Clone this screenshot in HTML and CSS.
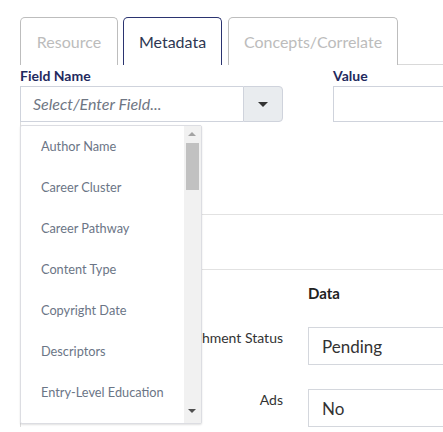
FILE: index.html
```html
<!DOCTYPE html>
<html>
<head>
<meta charset="utf-8">
<link rel="stylesheet" href="styles.css">
</head>
<body>
<div class="page">
  <div class="tabs">
    <div class="tab">Resource</div>
    <div class="tab active">Metadata</div>
    <div class="tab">Concepts/Correlate</div>
    <div class="tab-line"></div>
  </div>
  <div class="fields">
    <div class="field-col">
      <div class="label">Field Name</div>
      <div class="combo">
        <div class="combo-input">Select/Enter Field...</div>
        <div class="combo-btn"><span class="caret"></span></div>
      </div>
    </div>
    <div class="value-col">
      <div class="label">Value</div>
      <div class="value-input"></div>
    </div>
  </div>
  <div class="panel">
    <div class="band band1"></div>
    <div class="band band2"></div>
    <div class="grid">
      <div></div>
      <div class="head">Data</div>
      <div class="rlabel">Enrichment Status</div>
      <div class="box">Pending</div>
      <div class="rlabel">Ads</div>
      <div class="box">No</div>
    </div>
  </div>
  <div class="dropdown">
    <ul class="list">
      <li>Author Name</li>
      <li>Career Cluster</li>
      <li>Career Pathway</li>
      <li>Content Type</li>
      <li>Copyright Date</li>
      <li>Descriptors</li>
      <li>Entry-Level Education</li>
    </ul>
    <div class="scrollbar">
      <span class="arrow up"></span>
      <div class="thumb"></div>
      <span class="arrow down"></span>
    </div>
  </div>
</div>
</body>
</html>
```
FILE: styles.css
```css
html, body {
  margin: 0;
  padding: 0;
  background: #fff;
  overflow: hidden;
}
body {
  font-family: Lato, "Liberation Sans", sans-serif;
  width: 443px;
  height: 432px;
}
.page {
  position: relative;
  padding-left: 20px;
  padding-top: 17px;
}
.tabs {
  display: flex;
  align-items: flex-end;
  gap: 5px;
  height: 48px;
}
.tab {
  box-sizing: border-box;
  height: 48px;
  border: 1px solid #bdbdbd;
  border-bottom: none;
  border-radius: 5px 5px 0 0;
  font-size: 16px;
  line-height: 48px;
  color: #bcbcbc;
  width: 98px;
  text-align: center;
  flex-shrink: 0;
}
.tab:nth-child(2) { width: 99px; }
.tab:nth-child(3) { width: 170px; margin-left: 1px; }
.tab.active {
  border-color: #2b3470;
  color: #2e3752;
}
.tab-line {
  flex: 1;
  border-bottom: 1px solid #d9d9d9;
  margin-left: -5px;
}
.fields {
  display: flex;
  gap: 50px;
  margin-top: 3px;
}
.label {
  font-size: 14px;
  font-weight: bold;
  color: #1f2a5e;
  line-height: 16px;
  margin-bottom: 2px;
}
.field-col {
  width: 263px;
  flex-shrink: 0;
}
.combo {
  display: flex;
  height: 36px;
}
.combo-input {
  box-sizing: border-box;
  flex: 1;
  border: 1px solid #cfd3dc;
  border-right: none;
  font-size: 16px;
  font-style: italic;
  color: #6f7683;
  line-height: 34px;
  padding-left: 12px;
}
.combo-btn {
  box-sizing: border-box;
  width: 40px;
  background: #e9ecef;
  border: 1px solid #cfd3dc;
  border-radius: 0 4px 4px 0;
  display: flex;
  align-items: center;
  justify-content: center;
}
.caret {
  width: 0;
  height: 0;
  border-left: 5px solid transparent;
  border-right: 5px solid transparent;
  border-top: 5px solid #333;
}
.value-col {
  flex: 1;
  min-width: 0;
}
.value-input {
  box-sizing: border-box;
  height: 36px;
  width: 100%;
  border: 1px solid #cfd3dc;
  border-right: none;
}
.panel {
  border-left: 1px solid #dcdcdc;
}
.band1 {
  height: 92px;
  border-bottom: 1px solid #e2e2e2;
}
.band2 {
  height: 54px;
  border-bottom: 1px solid #e2e2e2;
}
.grid {
  display: grid;
  grid-template-columns: 262px 140px;
  column-gap: 25px;
  grid-template-rows: 45px 62px 50px;
}
.head {
  font-size: 15px;
  font-weight: bold;
  color: #222;
  padding-top: 14px;
}
.rlabel {
  font-size: 14px;
  color: #333;
  text-align: right;
  padding-top: 14px;
}
.box {
  box-sizing: border-box;
  height: 38px;
  margin-top: 12px;
  border: 1px solid #d4d7dd;
  border-right: none;
  font-size: 17px;
  color: #333;
  line-height: 38px;
  padding-left: 13px;
}
.dropdown {
  position: absolute;
  left: 20px;
  top: 125px;
  width: 182px;
  height: 299px;
  box-sizing: border-box;
  border: 1px solid #dcdde2;
  border-radius: 2px;
  background: #fff;
  box-shadow: 0 1px 2px rgba(0,0,0,0.12);
  display: flex;
}
.list {
  list-style: none;
  margin: 0;
  padding: 0;
  flex: 1;
  min-width: 0;
}
.list li {
  font-size: 12.75px;
  color: #6b7586;
  height: 41px;
  line-height: 41px;
  padding-left: 20px;
  white-space: nowrap;
}
.list li:first-child { margin-top: 0; }
.scrollbar {
  width: 17px;
  flex-shrink: 0;
  background: #f1f1f1;
  position: relative;
}
.thumb {
  position: absolute;
  left: 2px;
  top: 17px;
  width: 13px;
  height: 47px;
  background: #c1c1c1;
}
.arrow {
  position: absolute;
  left: 4px;
  width: 0;
  height: 0;
  border-left: 4px solid transparent;
  border-right: 4px solid transparent;
}
.arrow.up {
  top: 6px;
  border-bottom: 4px solid #a3a3a3;
}
.arrow.down {
  bottom: 10px;
  border-top: 4px solid #505050;
}
```
